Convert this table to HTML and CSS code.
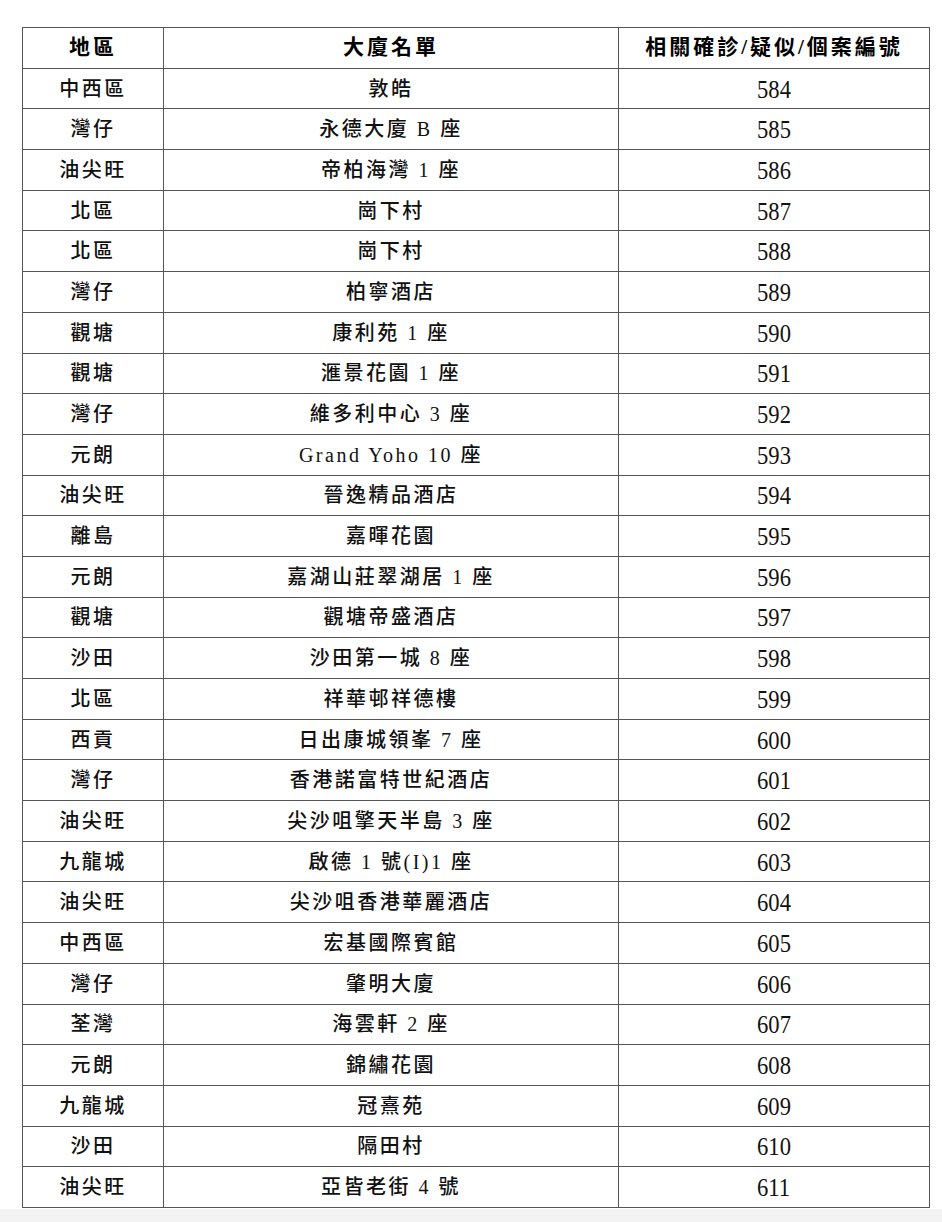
FILE: index.html
```html
<!DOCTYPE html>
<html lang="zh-Hant">
<head>
<meta charset="utf-8">
<title>大廈名單</title>
<link rel="stylesheet" href="styles.css">
</head>
<body>
<div class="page">
<table class="list">
<colgroup><col class="c1"><col class="c2"><col class="c3"></colgroup>
<thead>
<tr><th>地區</th><th>大廈名單</th><th>相關確診/疑似/個案編號</th></tr>
</thead>
<tbody>
<tr><td>中西區</td><td>敦皓</td><td class="num"><span>584</span></td></tr>
<tr><td>灣仔</td><td>永德大廈 B 座</td><td class="num"><span>585</span></td></tr>
<tr><td>油尖旺</td><td>帝柏海灣 1 座</td><td class="num"><span>586</span></td></tr>
<tr><td>北區</td><td>崗下村</td><td class="num"><span>587</span></td></tr>
<tr><td>北區</td><td>崗下村</td><td class="num"><span>588</span></td></tr>
<tr><td>灣仔</td><td>柏寧酒店</td><td class="num"><span>589</span></td></tr>
<tr><td>觀塘</td><td>康利苑 1 座</td><td class="num"><span>590</span></td></tr>
<tr><td>觀塘</td><td>滙景花園 1 座</td><td class="num"><span>591</span></td></tr>
<tr><td>灣仔</td><td>維多利中心 3 座</td><td class="num"><span>592</span></td></tr>
<tr><td>元朗</td><td>Grand Yoho 10 座</td><td class="num"><span>593</span></td></tr>
<tr><td>油尖旺</td><td>晉逸精品酒店</td><td class="num"><span>594</span></td></tr>
<tr><td>離島</td><td>嘉暉花園</td><td class="num"><span>595</span></td></tr>
<tr><td>元朗</td><td>嘉湖山莊翠湖居 1 座</td><td class="num"><span>596</span></td></tr>
<tr><td>觀塘</td><td>觀塘帝盛酒店</td><td class="num"><span>597</span></td></tr>
<tr><td>沙田</td><td>沙田第一城 8 座</td><td class="num"><span>598</span></td></tr>
<tr><td>北區</td><td>祥華邨祥德樓</td><td class="num"><span>599</span></td></tr>
<tr><td>西貢</td><td>日出康城領峯 7 座</td><td class="num"><span>600</span></td></tr>
<tr><td>灣仔</td><td>香港諾富特世紀酒店</td><td class="num"><span>601</span></td></tr>
<tr><td>油尖旺</td><td>尖沙咀擎天半島 3 座</td><td class="num"><span>602</span></td></tr>
<tr><td>九龍城</td><td>啟德 1 號(I)1 座</td><td class="num"><span>603</span></td></tr>
<tr><td>油尖旺</td><td>尖沙咀香港華麗酒店</td><td class="num"><span>604</span></td></tr>
<tr><td>中西區</td><td>宏基國際賓館</td><td class="num"><span>605</span></td></tr>
<tr><td>灣仔</td><td>肇明大廈</td><td class="num"><span>606</span></td></tr>
<tr><td>荃灣</td><td>海雲軒 2 座</td><td class="num"><span>607</span></td></tr>
<tr><td>元朗</td><td>錦繡花園</td><td class="num"><span>608</span></td></tr>
<tr><td>九龍城</td><td>冠熹苑</td><td class="num"><span>609</span></td></tr>
<tr><td>沙田</td><td>隔田村</td><td class="num"><span>610</span></td></tr>
<tr><td>油尖旺</td><td>亞皆老街 4 號</td><td class="num"><span>611</span></td></tr>
</tbody>
</table>
</div>
</body>
</html>
```
FILE: styles.css
```css
html {
  background: #f3f3f3;
}
body {
  margin: 0;
  font-family: "Liberation Serif", "Noto Sans CJK TC", serif;
  color: #111;
}
.page {
  background: #fff;
  padding: 27px 0 1px 22px;
  height: 1181px;
}
.list {
  border-collapse: collapse;
  width: 907px;
  table-layout: fixed;
}
.c1 { width: 141px; }
.c2 { width: 455px; }
.c3 { width: 311px; }
.list th,
.list td {
  border: 1px solid #555;
  padding: 0;
  height: 39.7px;
  text-align: center;
  vertical-align: middle;
  line-height: 1;
}
.list th {
  font-size: 21px;
  font-weight: 700;
  letter-spacing: 3px;
  color: #000;
}
.list td {
  font-size: 20px;
  font-weight: 500;
  letter-spacing: 2.5px;
}
.list td.num {
  font-size: 24px;
  font-weight: 400;
  letter-spacing: 0;
}
.list td.num span {
  display: inline-block;
  transform: scale(0.94, 1.08);
}
```
